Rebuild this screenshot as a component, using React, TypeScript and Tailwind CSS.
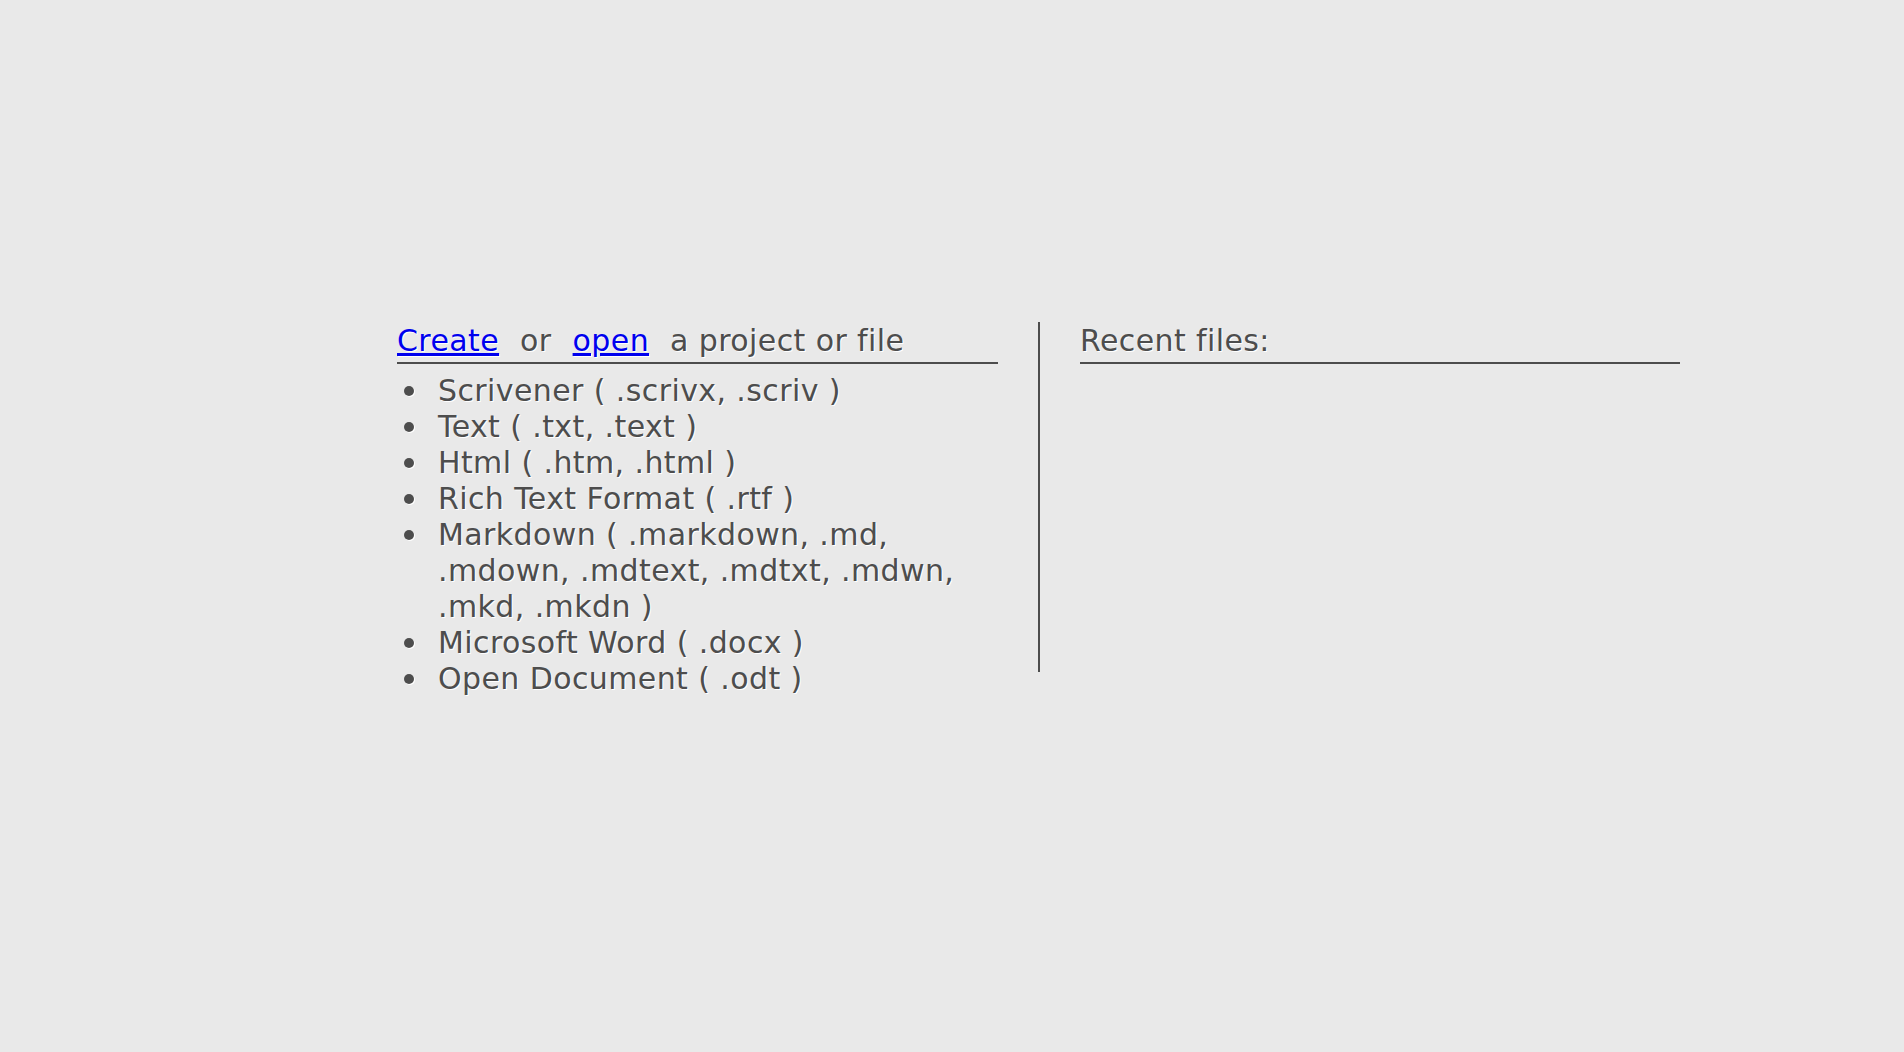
import React from "react";

const items: string[] = [
  "Scrivener ( .scrivx, .scriv )",
  "Text ( .txt, .text )",
  "Html ( .htm, .html )",
  "Rich Text Format ( .rtf )",
  "Markdown ( .markdown, .md, .mdown, .mdtext, .mdtxt, .mdwn, .mkd, .mkdn )",
  "Microsoft Word ( .docx )",
  "Open Document ( .odt )",
];

export default function App() {
  return (
    <div className="min-h-screen w-full bg-[#e9e9e9] text-[#4d4d4d] font-['DejaVu_Sans',sans-serif] text-[30px] leading-[36px] tracking-[0.4px] [text-shadow:1px_1px_0_#ffffff]">
      <div className="flex items-start pt-[322px] pl-[397px]">
        <section className="w-[601px]">
          <div className="pt-[1px] pb-[3px] border-b-2 border-[#4d4d4d] whitespace-nowrap">
            <a href="#" className="text-[#0000ee] underline">Create</a>
            <span className="mx-[21px]">or</span>
            <a href="#" className="text-[#0000ee] underline">open</a>
            <span className="ml-[21px]">a project or file</span>
          </div>
          <ul className="mt-[9px] list-none">
            {items.map((t) => (
              <li key={t} className="flex">
                <span className="w-[41px] h-[36px] shrink-0 flex items-center">
                  <span className="ml-[7px] w-[10px] h-[10px] rounded-full bg-[#4d4d4d] shadow-[1px_1px_0_#ffffff]" />
                </span>
                <span className="flex-1">{t}</span>
              </li>
            ))}
          </ul>
        </section>
        <div className="mx-[40px] w-[2px] h-[350px] bg-[#4d4d4d] shrink-0" />
        <section className="w-[600px]">
          <div className="pt-[1px] pb-[3px] border-b-2 border-[#4d4d4d] whitespace-nowrap">
            Recent files:
          </div>
        </section>
      </div>
    </div>
  );
}
